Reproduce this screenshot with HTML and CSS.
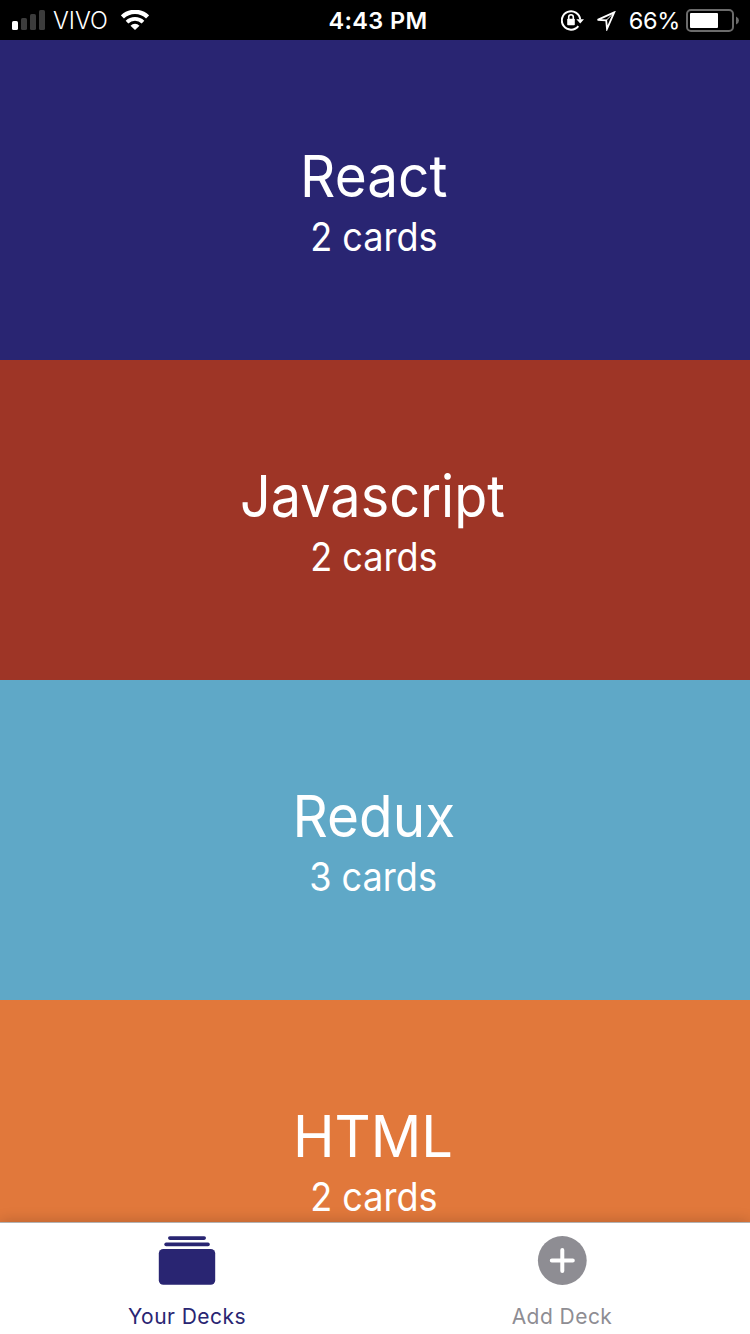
FILE: index.html
```html
<!DOCTYPE html>
<html lang="en">
<head>
<meta charset="utf-8">
<title>Your Decks</title>
<link rel="stylesheet" href="styles.css">
</head>
<body>
<div class="app">
  <header class="status">
    <div class="status-left">
      <svg class="signal" width="34" height="20" viewBox="0 0 34 20">
        <rect x="0" y="11" width="6" height="9" rx="1.6" fill="#fff"/>
        <rect x="9" y="8" width="6" height="12" rx="1.6" fill="#3c3c3c"/>
        <rect x="18" y="4" width="6" height="16" rx="1.6" fill="#3c3c3c"/>
        <rect x="27" y="0" width="6" height="20" rx="1.6" fill="#3c3c3c"/>
      </svg>
      <span class="carrier">VIVO</span>
      <svg class="wifi" width="28" height="20" viewBox="0 0 28 20">
        <g fill="none" stroke="#fff" stroke-width="4.4">
          <path d="M1.4 7A18 18 0 0 1 26.6 7"/>
          <path d="M6 12.2A11.5 11.5 0 0 1 22 12.2" stroke-width="3.8"/>
        </g>
        <path d="M14 20L9.5 15.7A6.4 6.4 0 0 1 18.5 15.7Z" fill="#fff"/>
      </svg>
    </div>
    <span class="time">4:43 PM</span>
    <div class="status-right">
      <svg class="lock" width="23" height="22" viewBox="0 0 23 22">
        <path d="M17.3 17.1A9.2 9.2 0 1 1 19.2 10.5" fill="none" stroke="#fff" stroke-width="2"/>
        <path d="M15.4 10.2H23L19.2 14.4Z" fill="#fff"/>
        <rect x="6.2" y="9.8" width="7.6" height="6.4" rx=".8" fill="#fff"/>
        <path d="M7.7 10V8a2.3 2.3 0 0 1 4.6 0V10" fill="none" stroke="#fff" stroke-width="1.6"/>
      </svg>
      <svg class="locate" width="20" height="20" viewBox="0 0 20 20">
        <path d="M18.2 1.4L1.6 8.9L10.2 9.4L11 17.8Z" fill="none" stroke="#fff" stroke-width="1.8"/>
        <path d="M10.2 9.4L18.2 1.4" stroke="#fff" stroke-width="1"/>
      </svg>
      <span class="percent">66%</span>
      <svg class="battery" width="54" height="24" viewBox="0 0 54 24">
        <rect x="1" y="1" width="46" height="21" rx="4" fill="none" stroke="#6b6b6b" stroke-width="2"/>
        <rect x="4" y="4" width="28" height="15" rx="1" fill="#fff"/>
        <path d="M50 7.5q3 1.5 3 4t-3 4Z" fill="#6b6b6b"/>
      </svg>
    </div>
  </header>

  <main class="decks">
    <section class="deck deck-navy"><h2 class="title title-react">React</h2><p class="count">2 cards</p></section>
    <section class="deck deck-red"><h2 class="title title-javascript">Javascript</h2><p class="count">2 cards</p></section>
    <section class="deck deck-blue"><h2 class="title title-redux">Redux</h2><p class="count">3 cards</p></section>
    <section class="deck deck-orange"><h2 class="title title-html">HTML</h2><p class="count">2 cards</p></section>
  </main>

  <nav class="tabs">
    <a class="tab tab-active">
      <svg class="tab-icon" width="58" height="50" viewBox="0 0 58 50">
        <rect x="10" y="0.3" width="38" height="3.6" rx="1.8" fill="currentColor"/>
        <rect x="6.3" y="6.6" width="45.5" height="3.6" rx="1.8" fill="currentColor"/>
        <rect x="0.8" y="13" width="56.4" height="35.8" rx="4.5" fill="currentColor"/>
      </svg>
      <span class="tab-label">Your Decks</span>
    </a>
    <a class="tab">
      <svg class="tab-icon" width="50" height="50" viewBox="0 0 50 50">
        <circle cx="25.3" cy="24.5" r="24.4" fill="currentColor"/>
        <path d="M25.3 14V35M14.8 24.5H35.8" stroke="#fff" stroke-width="4" stroke-linecap="round"/>
      </svg>
      <span class="tab-label">Add Deck</span>
    </a>
  </nav>
</div>
</body>
</html>
```
FILE: styles.css
```css
body {
  margin: 0;
  font-family: Inter, "Liberation Sans", sans-serif;
}

.app {
  display: flex;
  flex-direction: column;
  width: 750px;
  height: 1334px;
  overflow: hidden;
}

.status {
  display: grid;
  grid-template-columns: 1fr auto 1fr;
  align-items: center;
  flex: none;
  box-sizing: border-box;
  height: 40px;
  padding: 1px 10px 0 12px;
  background: #000;
  color: #fff;
  font-size: 23.5px;
  line-height: 38px;
  white-space: nowrap;
}

.status-left,
.status-right {
  display: flex;
  align-items: center;
}

.status-right {
  justify-content: flex-end;
}

.signal {
  margin: 0 7px 1px 0;
}

.carrier {
  width: 55px;
  margin-right: 13px;
  padding-top: 1px;
  font-weight: 300;
}

.wifi {
  margin-bottom: 1px;
}

.time {
  padding: 1px 0 0 4px;
  font-weight: 600;
  letter-spacing: 0.35px;
}

.lock {
  margin: 0 12px 2px 0;
}

.locate {
  margin-right: 13px;
}

.percent {
  margin-right: 6px;
  padding-top: 1px;
  letter-spacing: -0.3px;
}

.decks {
  flex: 1;
  min-height: 0;
  overflow: hidden;
}

.deck {
  display: flex;
  flex-direction: column;
  align-items: center;
  justify-content: center;
  box-sizing: border-box;
  height: 320px;
  padding: 1px 3px 0 0;
  color: #fff;
}

.deck-navy { background: #292572; }
.deck-red { background: #9e3526; }
.deck-blue { background: #5fa8c7; }
.deck-orange { background: #e1783b; }

.title,
.count {
  margin: 0;
  font-weight: 400;
}

.title {
  font-size: 58px;
  line-height: 72px;
  transform: scaleX(0.947);
}

.title-javascript {
  padding-right: 2px;
  transform: scaleX(0.93);
}

.title-html {
  padding-right: 1px;
  transform: scaleX(0.965);
}

.count {
  padding-top: 1px;
  font-size: 39px;
  line-height: 48px;
  transform: scaleX(0.925);
}

.tabs {
  position: relative;
  display: grid;
  grid-template-columns: 1fr 1fr;
  flex: none;
  box-sizing: border-box;
  height: 112px;
  border-top: 1px solid #b2b2b2;
  background: #fff;
  box-shadow: 0 0 14px rgba(0, 0, 0, 0.2);
}

.tab {
  display: flex;
  flex-direction: column;
  align-items: center;
  padding: 13px 2px 0 0;
  color: #8e8d93;
}

.tab-active {
  color: #292572;
}

.tab-label {
  margin-top: 17px;
  padding-left: 1px;
  font-size: 21px;
  line-height: 28px;
  letter-spacing: 0.45px;
}
```
